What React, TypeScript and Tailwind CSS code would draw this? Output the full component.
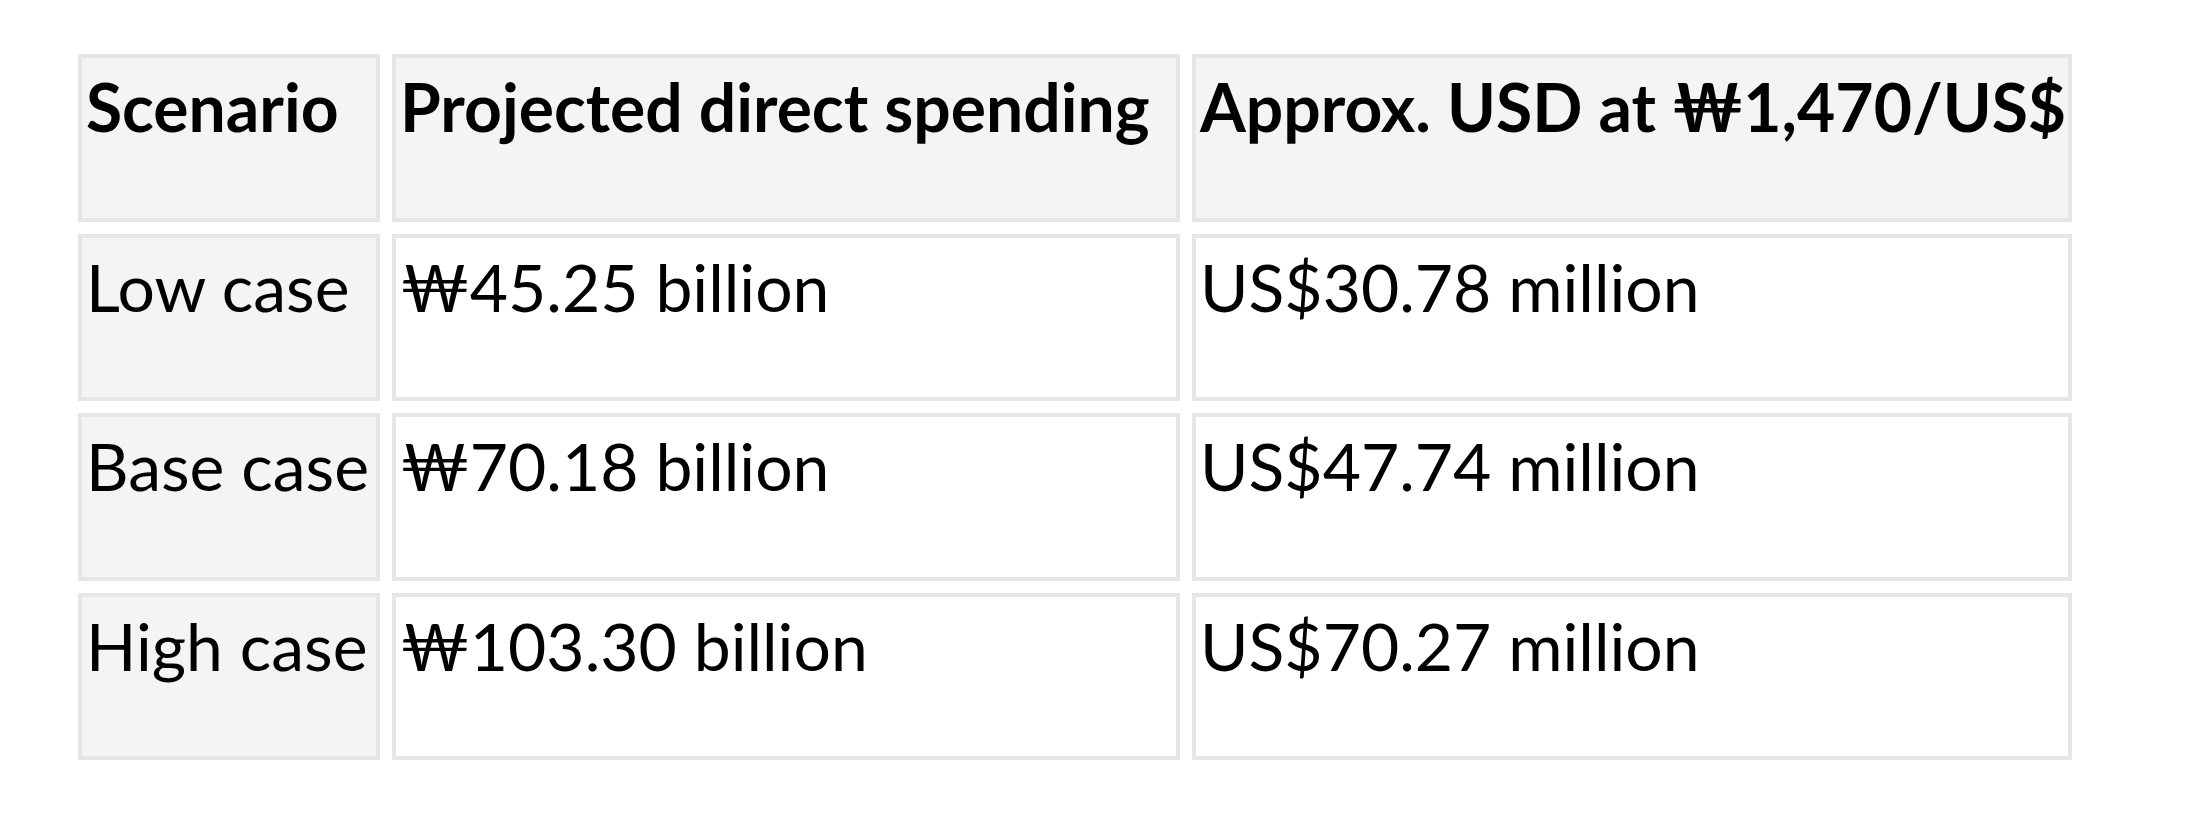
import React from "react";

const header = ["Scenario", "Projected direct spending", "Approx. USD at ₩1,470/US$"];

const rows = [
  ["Low case", "₩45.25 billion", "US$30.78 million"],
  ["Base case", "₩70.18 billion", "US$47.74 million"],
  ["High case", "₩103.30 billion", "US$70.27 million"],
];

export default function App() {
  return (
    <div className="min-h-[826px] bg-white font-['Lato','Noto_Sans',sans-serif] text-black">
      <div className="pl-[78px] pt-[54px]">
        <div className="grid grid-cols-[302px_788px_880px] grid-rows-[168px_167px_168px_167px] gap-3">
          {header.map((h) => (
            <div
              key={h}
              className="border-4 border-[#e6e6e6] bg-[#f4f4f4] pl-[4px] pt-[16px] text-[66px] font-bold leading-none whitespace-nowrap"
            >
              {h}
            </div>
          ))}
          {rows.map((r) =>
            r.map((c, i) => (
              <div
                key={r[0] + i}
                className={`border-4 border-[#e6e6e6] ${
                  i === 0 ? "bg-[#f4f4f4]" : "bg-white"
                } pl-[4px] pt-[16px] text-[66px] leading-none whitespace-nowrap`}
              >
                {c}
              </div>
            ))
          )}
        </div>
      </div>
    </div>
  );
}
